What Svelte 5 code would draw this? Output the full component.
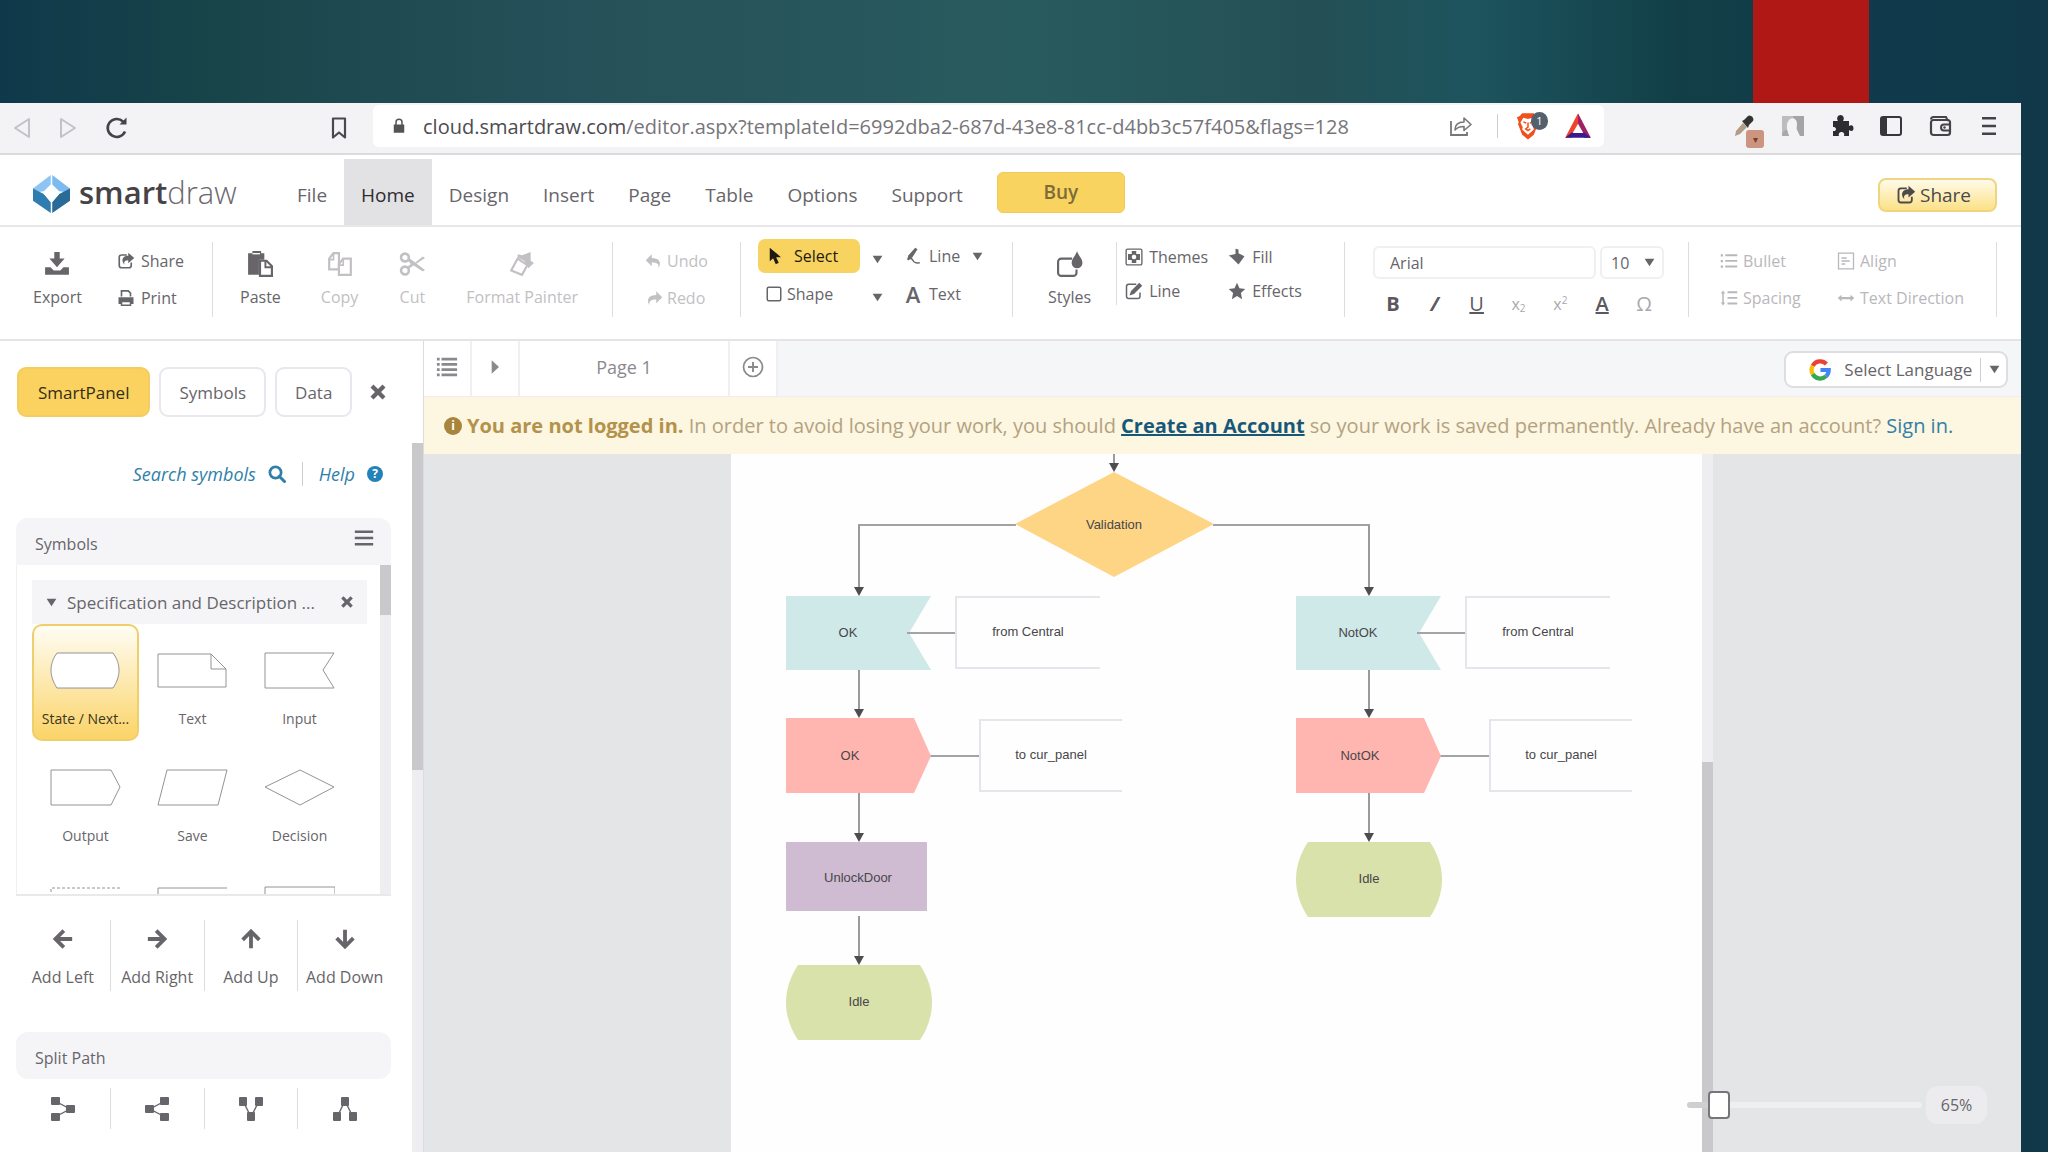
<script>
  const icons = {
    back: '<path d="M20 3v18L6 12z" fill="none" stroke="#c4c2c8" stroke-width="2" stroke-linejoin="round"/>',
    forward: '<path d="M4 3v18l14-9z" fill="none" stroke="#c4c2c8" stroke-width="2" stroke-linejoin="round"/>',
    reload: '<path d="M20 15.500A9 9 0 1 1 18 5.500" fill="none" stroke="#454248" stroke-width="2.600"/><path d="M14.500 8.500h7V1.500z" fill="#454248"/>',
    bookmark: '<path d="M6 2.500h12v19l-6-5-6 5z" fill="none" stroke="#4a484d" stroke-width="2.200" stroke-linejoin="round"/>',
    lock: '<path d="M5 10h14v11H5z"/><path d="M8 11V7a4 4 0 0 1 8 0v4" fill="none" stroke="currentColor" stroke-width="2"/>',
    send: '<path d="M2 7v14h16v-3" fill="none" stroke="#777" stroke-width="1.800"/><path d="M6 16c0-5 3-8 9-8V4l7 6.500-7 6v-4c-5 0-7 1-9 3.500z" fill="none" stroke="#777" stroke-width="1.600" stroke-linejoin="round"/>',
    brave: '<path d="M7 1h10l2 2.500 2.500 1-1.500 4 .5 2-3.500 9L12 23.500l-5-4-3.500-9 .5-2-1.500-4 2.500-1z" fill="#f0501c"/><path d="M8 5l4 1 4-1 2.500 4-2 4 .5 2-5 4.500L7 15l.5-2-2-4z" fill="#fff"/><path d="M8 8.500l2.500 1M16 8.500l-2.500 1M12 9v4l-2 1.500 2 1.500 2-1.500" fill="none" stroke="#f0501c" stroke-width="1.300"/>',
    bat: '<path d="M12 1L1 22h6l5-11z" fill="#f0432c"/><path d="M12 1l11 21h-6l-5-11z" fill="#a02068"/><path d="M1 22h22l-5.500-4.500h-11z" fill="#3b1a8f"/><path d="M12 10l4.500 8h-9z" fill="#fff"/>',
    dropper: '<path d="M3 22l1-5 7-8 4 4-7 7z" fill="#b39c88"/><path d="M10 7l2-1 4-4c2-2 7 2 5 5l-4 4-1 3z" fill="#333"/>',
    avatar: '<path d="M1 2h22v20H1z" fill="#bdbdbd"/><path d="M12 2h11v20h-5z" fill="#a4a4a4"/><path d="M8 22c-2-5-4-13 1-17 4-2 7 1 7 5 0 3-1 4 0 6l3 6z" fill="#f3f3f3"/><path d="M1 22c0-5 3-6 5-6l2 6z" fill="#a9a9a9"/>',
    puzzle: '<path d="M3 7h5c-2-3 0-6 2.500-6S15 4 13 7h6v5c3-2 4.500 0 4.500 2.200S22 18 19 16v6h-5c1-3-1-4-2.500-4S8 19 9 22H3v-5c4 1 4-5 0-4z" fill="#2e2c31"/>',
    panel: '<rect x="2" y="3" width="20" height="18" rx="2" fill="none" stroke="#38363b" stroke-width="2"/><path d="M3 4h5v16H3z" fill="#38363b"/>',
    wallet: '<path d="M3 5.500C3 4 4 3 5.500 3H18l2 4" fill="none" stroke="#454248" stroke-width="2"/><rect x="3" y="6" width="19" height="15" rx="2.500" fill="none" stroke="#454248" stroke-width="2.200"/><path d="M22 10.500h-6a3 3 0 0 0 0 6h6" fill="none" stroke="#454248" stroke-width="2"/><circle cx="16.500" cy="13.500" r="1.200"/>',
    menu: '<path d="M5 3h14v2.400H5zM5 10.800h14v2.400H5zM5 18.600h14V21H5z"/>',
    download: '<path d="M9.500 1h5v6h4.500l-7 8-7-8h4.500z"/><path d="M1 15h5l3 3h6l3-3h5v7H1z"/>',
    share: '<path d="M13 4H6a3 3 0 0 0-3 3v11a3 3 0 0 0 3 3h10a3 3 0 0 0 3-3v-4" fill="none" stroke="currentColor" stroke-width="2.200"/><path d="M15 1l8 7-8 7v-4c-5 0-6 2-5 6-5-5-3-12 5-12z"/>',
    print: '<path d="M6 10V2.500h9l3 3V10" fill="none" stroke="currentColor" stroke-width="2.200"/><path d="M2 11h20v9h-4v-3H6v3H2z"/><path d="M6 16.500h12v5H6z" fill="#fff" stroke="currentColor" stroke-width="2"/>',
    paste: '<path d="M1 2h4V0h8v2h3v6h-5v14H1z"/><path d="M5 2.500h7" stroke="#fff" stroke-width="1.200"/><path d="M12 9h6l5 5v9H12z" fill="#fff" stroke="currentColor" stroke-width="2"/><path d="M17 9v6h6" fill="none" stroke="currentColor" stroke-width="1.800"/>',
    copy: '<path d="M6 2h5v15H2V7z" fill="none" stroke="currentColor" stroke-width="2"/><path d="M6 2v6H2" fill="none" stroke="currentColor" stroke-width="1.500"/><path d="M15 7h7v15H11V12z" fill="#fff" stroke="currentColor" stroke-width="2"/><path d="M15 7v6h-4" fill="none" stroke="currentColor" stroke-width="1.500"/>',
    cut: '<g fill="none" stroke="currentColor" stroke-width="2.400"><circle cx="5.500" cy="6" r="3.600"/><circle cx="5.500" cy="18" r="3.600"/></g><path d="M8 9L10 7l5 3.500L22 5l2 1.500L11 15l-2.500 2L7 15l4-3z"/><path d="M13 13l3-1.500 8 6-2 1.500z"/>',
    painter: '<path d="M8 3l4 1 8-3v8l3 2-5 5-4-7-6-3z"/><path d="M8 7l9 6-5 9-10-4z" fill="none" stroke="currentColor" stroke-width="2"/>',
    undo: '<path d="M9 3v5c9 0 14 5 9 14 1-6-2-8-9-8v5L1 11z"/>',
    redo: '<path d="M15 3v5C6 8 1 13 6 22c-1-6 2-8 9-8v5l8-8z"/>',
    pointer: '<path d="M5 1v18l4.500-4 3.500 8 4-2-3.500-7.500H20z"/>',
    line: '<path d="M15 1l3 2-7 11-7 3 2-6z"/><path d="M5 17c5-3 6-1 7 1s2 4 9 3" fill="none" stroke="currentColor" stroke-width="2"/>',
    square: '<rect x="3" y="3" width="18" height="18" rx="2" fill="none" stroke="currentColor" stroke-width="2"/>',
    styles: '<path d="M14 7H4a3 3 0 0 0-3 3v10a3 3 0 0 0 3 3h11a3 3 0 0 0 3-3v-3" fill="none" stroke="currentColor" stroke-width="2"/><path d="M18.500 0c1 4 5 7 5 11a5 5 0 0 1-10 0c0-4 4-7 5-11z"/>',
    themes: '<rect x="1.500" y="1.500" width="21" height="21" rx="2" fill="none" stroke="currentColor" stroke-width="1.800"/><path d="M9 4h6v4h5v8h-5v4H9v-4H4V8h5z"/><circle cx="12" cy="12" r="3" fill="#fff"/>',
    fill: '<path d="M10 1l4 1v5l8 4-8 11-9-9-4-3 9-2z"/>',
    edit: '<path d="M15 3H5a3 3 0 0 0-3 3v13a3 3 0 0 0 3 3h12a3 3 0 0 0 3-3v-5" fill="none" stroke="currentColor" stroke-width="2"/><path d="M19 1l4 4-11 11-6 2 2-6z"/>',
    star: '<path d="M12 1l3.300 7.300 7.700.9-5.800 5.400L18.800 23 12 18.800 5.200 23l1.600-8.400L1 9.200l7.700-.9z"/>',
    list: '<path d="M1 3h3v3H1zM1 10.500h3v3H1zM1 18h3v3H1zM7 3h16v2.500H7zM7 10.500h16V13H7zM7 18h16v2.500H7z"/>',
    pages: '<path d="M1 2h3v3H1zM1 7.700h3v3H1zM1 13.400h3v3H1zM1 19h3v3H1zM6 2h17v3H6zM6 7.700h17v3H6zM6 13.400h17v3H6zM6 19h17v3H6z"/>',
    spacing: '<path d="M4 2L1 6h2v12H1l3 4 3-4H5V6h2zM10 3h13v2.500H10zM10 10.500h13V13H10zM10 18h13v2.500H10z"/>',
    align: '<rect x="2" y="1.500" width="20" height="21" fill="none" stroke="currentColor" stroke-width="1.700"/><path d="M6 7h7v2H6zM6 11h11v2H6zM6 15h5v2H6z"/>',
    direction: '<path d="M1 12l5-4.500v3h12v-3l5 4.500-5 4.500v-3H6v3z"/>',
    close: '<path d="M6 2l6 6 6-6 4 4-6 6 6 6-4 4-6-6-6 6-4-4 6-6-6-6z"/>',
    search: '<circle cx="10" cy="10" r="7.500" fill="none" stroke="currentColor" stroke-width="3.600"/><path d="M15 15l7 7" stroke="currentColor" stroke-width="4" stroke-linecap="round"/>',
    bars: '<path d="M1 3h22v3H1zM1 10.500h22v3H1zM1 18h22v3H1z"/>',
    caret: '<path d="M3 5h18L12 19z"/>',
    play: '<path d="M7 2v20l11-10z"/>',
    plus: '<circle cx="12" cy="12" r="9.500" fill="none" stroke="currentColor" stroke-width="1.700"/><path d="M12 7v10M7 12h10" stroke="currentColor" stroke-width="1.900"/>',
    left: '<path d="M13 2L3 12l10 10M4 12h19" fill="none" stroke="currentColor" stroke-width="4.600"/>',
    right: '<path d="M11 2l10 10-10 10M20 12H1" fill="none" stroke="currentColor" stroke-width="4.600"/>',
    up: '<path d="M2 13L12 3l10 10M12 4v19" fill="none" stroke="currentColor" stroke-width="4.600"/>',
    down: '<path d="M2 11l10 10 10-10M12 20V1" fill="none" stroke="currentColor" stroke-width="4.600"/>',
    splitRight: '<path d="M4 4l15 8-15 8" fill="none" stroke="currentColor" stroke-width="1.400"/><rect width="9" height="8" rx="1"/><rect y="16" width="9" height="8" rx="1"/><rect x="15" y="8" width="9" height="8" rx="1"/>',
    splitLeft: '<path d="M20 4L5 12l15 8" fill="none" stroke="currentColor" stroke-width="1.400"/><rect x="15" width="9" height="8" rx="1"/><rect x="15" y="16" width="9" height="8" rx="1"/><rect y="8" width="9" height="8" rx="1"/>',
    splitDown: '<path d="M4 4l8 16 8-16" fill="none" stroke="currentColor" stroke-width="1.400"/><rect width="8" height="9" rx="1"/><rect x="16" width="8" height="9" rx="1"/><rect x="8" y="15" width="8" height="9" rx="1"/>',
    splitUp: '<path d="M4 20l8-16 8 16" fill="none" stroke="currentColor" stroke-width="1.400"/><rect x="8" width="8" height="9" rx="1"/><rect y="15" width="8" height="9" rx="1"/><rect x="16" y="15" width="8" height="9" rx="1"/>',
    google: '<g fill="none" stroke-width="4.600"><path d="M4 7.500A9.300 9.300 0 0 1 19 5.500" stroke="#ea4335"/><path d="M4 16.500a9.500 9.500 0 0 1 0-9" stroke="#fbbc05"/><path d="M18.500 18.800A9.300 9.300 0 0 1 4 16.500" stroke="#34a853"/><path d="M12.500 12h9c0 3-1 5.200-3 6.800" stroke="#4285f4"/></g>',
    logo: '<path d="M11.500 0v7L7 12l-7 1V10z" fill="#8cc4f4"/><path d="M12.500 0v7l4.500 5 7 1V10z" fill="#7dbaf0"/><path d="M0 10l7 4 4.500 6v8L0 19z" fill="#2f7cb0"/><path d="M24 10l-7 4-4.500 6v8L24 19z" fill="#296a96"/><path d="M12 8l5 6-5 6-5-6z" fill="#fff"/>'
  };

  const menus = ['File', 'Home', 'Design', 'Insert', 'Page', 'Table', 'Options', 'Support'];
  const extensions = ['puzzle', 'panel', 'wallet', 'menu'];

  const symbols = [
    { name: 'State / Next...', path: 'M7 1H63C71 12 71 24 63 36H7C-1 24-1 12 7 1z', active: true },
    { name: 'Text', path: 'M1 2H54L69 17V35H1zM54 2V17H69' },
    { name: 'Input', path: 'M1 1H70L59 18L70 36H1z' },
    { name: 'Output', path: 'M1 1H61L70 18L61 36H1z' },
    { name: 'Save', path: 'M10 1H70L61 36H1z' },
    { name: 'Decision', path: 'M1 18L36 1L70 18L36 36z' },
    { label: 'Dashed bracket', path: 'M70 2H1V36', dashed: true },
    { label: 'Bracket', path: 'M70 2H1V36' },
    { label: 'Block', path: 'M1 36V1H71V36' }
  ];

  const adds = [['left', 'Add Left'], ['right', 'Add Right'], ['up', 'Add Up'], ['down', 'Add Down']];
  const splits = [['splitRight', 'Merge right'], ['splitLeft', 'Split right'], ['splitDown', 'Merge down'], ['splitUp', 'Split down']];

  const branches = [
    { x: 55, y: 142, name: 'OK', idle: 369, task: 'UnlockDoor' },
    { x: 565, y: 142, name: 'NotOK', idle: 246 }
  ];

  let zoom = $state(65);
</script>

{#snippet icon(name, size = 's18')}
  <svg class="icon {size}" viewBox="0 0 24 24" fill="currentColor" aria-hidden="true">{@html icons[name]}</svg>
{/snippet}

{#snippet tool(name, label)}
  <button class="tool">{@render icon(name)}<span>{label}</span></button>
{/snippet}

{#snippet big(name, label)}
  <button class="big">{@render icon(name, 's26')}<span>{label}</span></button>
{/snippet}

{#snippet arrow(x, from, to)}
  <path d="M{x} {from}V{to - 8}" stroke="#9a9a9d" stroke-width="2" />
  <path d="M{x - 5} {to - 9}h10l-5 9z" fill="#4d4d50" />
{/snippet}

<div class="slide">
  <div class="accent"></div>
  <div class="window">
    <header class="browser">
      <nav class="history" aria-label="History">
        <button aria-label="Back">{@render icon('back', 's24')}</button>
        <button aria-label="Forward">{@render icon('forward', 's24')}</button>
        <button aria-label="Reload">{@render icon('reload', 's24')}</button>
        <button class="mark" aria-label="Bookmark">{@render icon('bookmark', 's24')}</button>
      </nav>
      <div class="address">
        {@render icon('lock')}
        <span class="url"><b>cloud.smartdraw.com</b>/editor.aspx?templateId=6992dba2-687d-43e8-81cc-d4bb3c57f405&amp;flags=128</span>
        <button aria-label="Share page">{@render icon('send', 's24')}</button>
        <i class="bar"></i>
        <button class="shield" aria-label="Shields">{@render icon('brave', 's28')}<span class="count">1</span></button>
        <button aria-label="Rewards">{@render icon('bat', 's28')}</button>
      </div>
      <div class="extensions">
        <button class="dropper" aria-label="Colour picker">{@render icon('dropper', 's24')}<span class="chip">▾</span></button>
        <button aria-label="Profile">{@render icon('avatar', 's24')}</button>
        {#each extensions as name}
          <button aria-label={name}>{@render icon(name, 's24')}</button>
        {/each}
      </div>
    </header>

    <div class="menubar">
      <a class="logo" href="#home">
        <svg viewBox="0 0 24 28" preserveAspectRatio="none" aria-hidden="true">{@html icons.logo}</svg>
        <span><b>smart</b>draw</span>
      </a>
      <nav class="menus">
        {#each menus as name}
          <button class:current={name === 'Home'}>{name}</button>
        {/each}
      </nav>
      <button class="buy">Buy</button>
      <button class="share">{@render icon('share', 's20')}Share</button>
    </div>

    <div class="ribbon">
      <div class="group files">
        {@render big('download', 'Export')}
        <div class="stack">{@render tool('share', 'Share')}{@render tool('print', 'Print')}</div>
      </div>
      <div class="group clip">
        {@render big('paste', 'Paste')}
        <div class="faded">{@render big('copy', 'Copy')}{@render big('cut', 'Cut')}{@render big('painter', 'Format Painter')}</div>
      </div>
      <div class="group past">
        <div class="stack">{@render tool('undo', 'Undo')}{@render tool('redo', 'Redo')}</div>
      </div>
      <div class="group draw">
        <div class="pens">
          <button class="tool selected">{@render icon('pointer')}<span>Select</span></button>
          <button class="drop" aria-label="Select options">{@render icon('caret', 's13')}</button>
          <button class="tool wide">{@render icon('line')}<span>Line</span>{@render icon('caret', 's13')}</button>
          <button class="tool shape">{@render icon('square')}<span>Shape</span></button>
          <button class="drop" aria-label="Shape options">{@render icon('caret', 's13')}</button>
          <button class="tool wide"><span class="letter">A</span><span>Text</span></button>
        </div>
      </div>
      <div class="group look">
        {@render big('styles', 'Styles')}
        <div class="looks">
          {@render tool('themes', 'Themes')}{@render tool('fill', 'Fill')}
          {@render tool('edit', 'Line')}{@render tool('star', 'Effects')}
        </div>
      </div>
      <div class="group type">
        <div class="fonts">
          <input aria-label="Font" value="Arial" />
          <div class="size">
            <select aria-label="Font size"><option>10</option><option>12</option></select>
            {@render icon('caret', 's13')}
          </div>
        </div>
        <div class="marks">
          <button><b>B</b></button>
          <button><b><em>/</em></b></button>
          <button><u>U</u></button>
          <button class="dim">x<sub>2</sub></button>
          <button class="dim">x<sup>2</sup></button>
          <button><u class="heavy">A</u></button>
          <button class="dim omega">Ω</button>
        </div>
      </div>
      <div class="group para">
        {@render tool('list', 'Bullet')}{@render tool('align', 'Align')}
        {@render tool('spacing', 'Spacing')}{@render tool('direction', 'Text Direction')}
      </div>
    </div>

    <div class="work">
      <aside>
        <div class="panels">
          <button class="on">SmartPanel</button>
          <button>Symbols</button>
          <button>Data</button>
          <button class="plain" aria-label="Close panel">{@render icon('close')}</button>
        </div>
        <div class="scroll">
          <div class="content">
            <div class="links">
              <a href="#search">Search symbols{@render icon('search')}</a>
              <i class="bar"></i>
              <a href="#help">Help<span class="dot help">?</span></a>
            </div>
            <section class="library">
              <h2>Symbols<button aria-label="Symbols menu">{@render icon('bars', 's20')}</button></h2>
              <div class="shelf">
                <div class="set">
                  <h3>{@render icon('caret', 's13')}<span>Specification and Description ...</span><button aria-label="Close set">{@render icon('close', 's14')}</button></h3>
                  <div class="tiles">
                    {#each symbols as s}
                      <button class:active={s.active} aria-label={s.label}>
                        <svg viewBox="0 0 71 37" aria-hidden="true"><path d={s.path} class:dashed={s.dashed} /></svg>
                        {#if s.name}<span>{s.name}</span>{/if}
                      </button>
                    {/each}
                  </div>
                </div>
                <div class="track"><div class="thumb short"></div></div>
              </div>
            </section>
            <div class="four adds">
              {#each adds as [name, label]}
                <button>{@render icon(name, 's20')}<span>{label}</span></button>
              {/each}
            </div>
            <h2 class="split">Split Path</h2>
            <div class="four splits">
              {#each splits as [name, label]}
                <button aria-label={label}>{@render icon(name, 's24')}</button>
              {/each}
            </div>
          </div>
          <div class="track"><div class="thumb long"></div></div>
        </div>
      </aside>

      <main>
        <div class="tabs">
          <button class="cell" aria-label="Page list">{@render icon('pages', 's22')}</button>
          <button class="cell" aria-label="Next">{@render icon('play', 's16')}</button>
          <button class="cell page-tab">Page 1</button>
          <button class="cell" aria-label="Add page">{@render icon('plus', 's24')}</button>
          <label class="language">
            {@render icon('google', 's22')}
            <select aria-label="Select Language"><option>Select Language</option></select>
            <i class="bar"></i>
            {@render icon('caret', 's13')}
          </label>
        </div>
        <p class="banner">
          <span class="dot info">i</span>
          <span><b>You are not logged in.</b> In order to avoid losing your work, you should <a class="create" href="#create">Create an Account</a> so your work is saved permanently. Already have an account? <a href="#signin">Sign in.</a></span>
        </p>
        <div class="canvas">
          <div class="page">
            <svg class="diagram" width="972" height="640" role="img" aria-label="Flowchart">
              <g fill="none">
                <path d="M285 71H128V136M482 71H638V136" stroke="#a2a2a5" stroke-width="2" />
                {@render arrow(383, 0, 18)}
                {@render arrow(128, 71, 142)}
                {@render arrow(638, 71, 142)}
              </g>
              <path d="M383 18L483 70L383 123L284 70z" fill="#fdd585" />
              <text x="383" y="75">Validation</text>
              {#each branches as b}
                <g transform="translate({b.x} {b.y})">
                  <path d="M0 0H145L123 37L145 74H0z" fill="#cfe8e8" />
                  <path d="M121 37H170M144 160H194" stroke="#a2a4a7" stroke-width="2" />
                  <path d="M314 1H170V72H314M336 124H194V195H336" fill="none" stroke="#e4e6ec" stroke-width="2" />
                  <path d="M0 122H128L145 160L128 197H0z" fill="#ffb6b0" />
                  {@render arrow(73, 74, 122)}
                  {@render arrow(73, 197, 246)}
                  <text x="62" y="41">{b.name}</text>
                  <text x="242" y="40">from Central</text>
                  <text x="64" y="164">{b.name}</text>
                  <text x="265" y="163">to cur_panel</text>
                  {#if b.task}
                    <rect y="246" width="141" height="69" fill="#cfbcd2" />
                    <text x="72" y="286">{b.task}</text>
                    {@render arrow(73, 320, 369)}
                  {/if}
                  <g transform="translate(0 {b.idle})">
                    <path d="M12 0H134C150 24 150 51 134 75H12C-4 51-4 24 12 0z" fill="#d9e2aa" />
                    <text x="73" y="41">Idle</text>
                  </g>
                </g>
              {/each}
            </svg>
          </div>
          <div class="track"><div class="thumb low"></div></div>
          <div class="zoom">
            <input type="range" aria-label="Zoom" min="45" max="245" bind:value={zoom} />
            <output>{zoom}%</output>
          </div>
        </div>
      </main>
    </div>
  </div>
</div>

<style>
  :global(body) { margin: 0; font-family: "Open Sans", "Noto Sans", sans-serif; font-size: 16px; color: #67656a; }
  button, input, select { font: inherit; color: inherit; background: none; border: 0; padding: 0; margin: 0; }
  button { display: inline-flex; align-items: center; justify-content: center; white-space: nowrap; }
  h2, h3, p { margin: 0; font-weight: 400; }
  a { text-decoration: none; }
  select { appearance: none; }

  .icon { flex: none; display: block; }
  .s13 { width: 13px; height: 13px; }
  .s14 { width: 14px; height: 14px; }
  .s16 { width: 16px; height: 16px; }
  .s18 { width: 18px; height: 18px; }
  .s20 { width: 20px; height: 20px; }
  .s22 { width: 22px; height: 22px; }
  .s24 { width: 24px; height: 24px; }
  .s26 { width: 26px; height: 26px; }
  .s28 { width: 28px; height: 28px; }
  .bar { width: 1px; height: 24px; background: #cfcfd3; }

  .slide {
    position: relative; box-sizing: border-box; min-height: 100vh; display: flex; padding: 103px 27px 0 0;
    background: linear-gradient(90deg, #10384b 0, #174449 10%, #265059 27%, #285b5e 50%, #245055 64%, #1d545e 72%, #123f47 82%, #103a4b 92%, #103849);
  }
  .accent { position: absolute; top: 0; right: 179px; width: 116px; height: 103px; background: #b01815; }
  .window { flex: 1; min-width: 0; display: flex; flex-direction: column; background: #fff; }

  .browser { display: flex; align-items: center; height: 50px; background: #f3f2f5; border-bottom: 2px solid #dcdadd; }
  .history { display: flex; gap: 24px; width: 364px; padding-left: 9px; align-items: center; }
  .history .mark { margin-left: auto; margin-right: 22px; }
  .address { flex: 1; display: flex; align-items: center; height: 42px; margin-bottom: 4px; padding: 0 12px 0 17px; border-radius: 6px; background: #fff; color: #555358; }
  .url { margin: 0 auto 0 15px; font-size: 20px; color: #77757a; white-space: nowrap; }
  .url b { font-weight: 400; color: #4d4b50; }
  .address .bar { margin: 0 16px 0 24px; }
  .shield { position: relative; margin-right: 22px; }
  .count { position: absolute; left: 17px; top: 0; width: 17px; height: 18px; border-radius: 9px; background: #55606d; color: #fff; font-size: 11px; line-height: 18px; }
  .extensions { display: flex; align-items: center; gap: 25px; width: 270px; padding: 0 19px 4px 128px; color: #454248; }
  .dropper { position: relative; }
  .chip { position: absolute; left: 14px; top: 16px; width: 18px; height: 18px; border-radius: 3px; background: #cc957f; color: #7a3b28; font-size: 10px; line-height: 18px; }

  .menubar { display: flex; align-items: center; box-sizing: border-box; height: 72px; padding: 4px 24px 0 0; border-bottom: 2px solid #e8e6e8; font-size: 19px; }
  .logo { display: flex; align-items: center; gap: 9px; width: 247px; padding-left: 33px; font-size: 31px; line-height: 40px; font-weight: 300; color: #6b696d; }
  .logo svg { width: 37px; height: 38px; margin-top: 4px; }
  .logo b { font-weight: 600; color: #454347; }
  .menus { display: flex; align-self: stretch; }
  .menus button { padding: 6px 17px 0; }
  .menus .current { background: #e2e2e4; color: #2e2c30; }
  .buy { width: 128px; height: 41px; margin: 0 auto 0 17px; border-radius: 6px; background: #f9d35f; border: 1px solid #f0ca58; font-weight: 600; color: #7d6b3a; }
  .share { width: 119px; height: 34px; margin-top: 6px; gap: 4px; padding-right: 8px; border: 2px solid #f0d580; border-radius: 8px; background: linear-gradient(#fffbea, #fce186); color: #4c4a4a; }

  .ribbon { display: grid; grid-template-columns: 213fr 400fr 128fr 272fr 332fr 344fr 308fr; padding: 15px 24px 22px 0; border-bottom: 2px solid #e4e3e6; }
  .group { display: flex; box-sizing: border-box; height: 75px; border-right: 1px solid #dddce0; }
  .big { display: flex; flex-direction: column; justify-content: flex-start; gap: 7px; padding-top: 9px; line-height: 26px; }
  .tool { gap: 6px; justify-content: flex-start; }
  .stack { display: grid; grid-template-rows: 1fr 1fr; }
  .files { padding-left: 33px; gap: 35px; }
  .clip { padding-left: 27px; justify-content: flex-start; gap: 40px; }
  .faded { display: flex; gap: 41px; color: #c2c0c4; }
  .past { padding-left: 32px; color: #c2c0c4; }
  .past .tool { gap: 4px; }
  .draw { padding-left: 17px; }
  .pens { display: grid; grid-template-columns: 113px 33px 1fr; grid-template-rows: 34px 34px; row-gap: 4px; margin-top: -3px; align-items: center; }
  .selected { height: 34px; margin-right: 11px; padding-left: 8px; gap: 10px; border-radius: 7px; background: #f9d35f; color: #1d1a10; }
  .drop { justify-content: flex-start; padding-top: 6px; }
  .shape { padding-left: 7px; gap: 4px; }
  .wide { gap: 7px; }
  .wide .s13 { margin-left: 4px; }
  .letter { width: 18px; font-size: 22px; font-weight: 600; line-height: 24px; }
  .look { padding-left: 35px; gap: 25px; }
  .looks { display: grid; grid-template-columns: 103px auto; grid-template-rows: 29px 29px; row-gap: 5px; height: 63px; padding-left: 8px; border-left: 1px solid #dddce0; align-content: start; }
  .type { flex-direction: column; padding: 4px 24px 0 28px; gap: 12px; }
  .fonts { display: flex; gap: 4px; height: 37px; }
  .fonts input { flex: 1; min-width: 0; box-sizing: border-box; padding-left: 15px; border: 2px solid #f0eff2; border-radius: 6px; }
  .size { display: flex; align-items: center; box-sizing: border-box; width: 64px; padding: 0 6px 0 9px; border: 2px solid #f0eff2; border-radius: 6px; justify-content: space-between; }
  .marks { display: flex; justify-content: space-between; padding: 0 10px; font-size: 20px; line-height: 26px; color: #5b595e; }
  .marks button { width: 20px; height: 26px; }
  .marks .dim { font-size: 16px; color: #aaa8ad; }
  .marks .omega { font-size: 20px; }
  sub, sup { font-size: 10px; line-height: 10px; }
  sup { align-self: flex-start; padding-top: 4px; }
  sub { align-self: flex-end; padding-bottom: 4px; }
  .heavy { font-weight: 600; }
  .para { display: grid; grid-template-columns: 117px auto; grid-template-rows: 1fr 1fr; padding-left: 31px; color: #b9b7bc; justify-content: start; }
  .para .tool { gap: 5px; }

  .work { flex: 1; display: flex; min-height: 812px; }
  aside { width: 423px; display: flex; flex-direction: column; border-right: 1px solid #dcdbe0; }
  .panels { display: flex; gap: 9px; height: 50px; padding: 26px 17px; font-size: 17px; }
  .panels button { padding: 0 18px; border: 2px solid #e9e7ed; border-radius: 9px; }
  .panels .on { padding: 0 19px; background: #fbd25f; border-color: #f3cd62; color: #332d18; }
  .panels .plain { border: 0; padding: 0 8px; }
  .scroll { flex: 1; display: flex; }
  .content { flex: 1; padding: 0 21px 0 16px; }
  .track { width: 11px; background: #eeedf0; }
  .thumb { background: #c9c8cb; }
  .long { height: 46%; }
  .short { height: 50px; }
  .links { display: flex; align-items: center; justify-content: flex-end; gap: 16px; height: 62px; padding: 0 8px 13px 0; font-size: 18px; font-style: italic; }
  .links a { display: flex; align-items: center; gap: 12px; color: #2f7fa9; }
  .dot { flex: none; border-radius: 50%; width: 16px; height: 16px; font-size: 12px; font-weight: 700; font-style: normal; line-height: 16px; text-align: center; color: #fff; }
  .help { background: #2383b8; }
  h2 { display: flex; align-items: center; justify-content: space-between; box-sizing: border-box; height: 47px; padding: 4px 17px 0 19px; border-radius: 12px 12px 0 0; background: #f5f5f8; font-size: 16px; }
  h2 button { margin-bottom: 12px; }
  .library { height: 378px; box-sizing: border-box; overflow: hidden; border-bottom: 2px solid #e9e8eb; }
  .shelf { display: flex; height: 331px; border-left: 1px solid #f0f0f2; }
  .set { flex: 1; padding: 15px 13px 0 15px; }
  h3 { display: flex; align-items: center; height: 44px; padding: 0 13px; gap: 9px; background: #f5f5f8; font-size: 17px; }
  h3 span { flex: 1; white-space: nowrap; }
  .tiles { display: grid; grid-template-columns: repeat(3, 107px); grid-auto-rows: 117px; }
  .tiles button { flex-direction: column; justify-content: flex-start; gap: 18px; padding-top: 27px; border: 1px solid transparent; border-radius: 10px; font-size: 14px; line-height: 24px; }
  .tiles svg { flex: none; width: 71px; height: 37px; }
  .tiles path { fill: #fff; stroke: #949297; stroke-width: 1; }
  .tiles .dashed { stroke-dasharray: 3 2; }
  .tiles .active { border: 2px solid #efcf6c; padding-top: 26px; background: linear-gradient(#fffdf4, #fbd468); color: #3c3520; }
  .four { display: grid; grid-template-columns: repeat(4, 1fr); }
  .four button + button { border-left: 1px solid #dddce0; }
  .adds { margin: 24px 0 41px; height: 71px; }
  .adds button { flex-direction: column; gap: 16px; padding-top: 7px; line-height: 24px; }
  .split { border-radius: 12px; }
  .splits { margin-top: 9px; height: 41px; }

  main { flex: 1; min-width: 0; display: flex; flex-direction: column; }
  .tabs { display: flex; height: 55px; background: #f5f6f8; border-bottom: 1px solid #f2ecec; }
  .cell { box-sizing: border-box; width: 48px; padding-bottom: 4px; background: #fff; border-right: 2px solid #f1eff3; color: #8b898e; }
  .page-tab { width: 210px; font-size: 18px; }
  .language { display: flex; align-items: center; box-sizing: border-box; width: 224px; height: 37px; margin: 10px 13px 0 auto; padding: 0 5px 0 23px; border: 2px solid #dedde1; border-radius: 9px; background: #fff; justify-content: space-between; font-size: 17px; }
  .language select { margin-left: 6px; }
  .banner { display: flex; align-items: center; height: 57px; padding-left: 20px; gap: 5px; background: #fdf6e0; font-size: 20px; color: #b3a282; white-space: nowrap; overflow: hidden; }
  .banner b { color: #b3924c; }
  .info { width: 18px; height: 18px; line-height: 18px; background: #a8853c; }
  .banner a { color: #337fa8; }
  .banner .create { font-weight: 700; color: #17587a; text-decoration: underline; }
  .canvas { position: relative; flex: 1; display: flex; padding: 0 308px 0 307px; background: #e3e5e7; }
  .page { flex: 1; min-width: 0; background: #fefefe; }
  .diagram { display: block; margin: 0 auto; }
  text { font-family: "Liberation Sans", Arial, sans-serif; font-size: 13px; fill: #48464a; text-anchor: middle; }
  .canvas .track { display: flex; align-items: flex-end; }
  .low { width: 11px; height: 56%; }
  .zoom { position: absolute; right: 34px; bottom: 29px; display: flex; align-items: center; gap: 4px; }
  .zoom input { appearance: none; width: 235px; height: 28px; }
  .zoom input::-webkit-slider-runnable-track { height: 6px; border-radius: 3px; background: linear-gradient(90deg, #cfced1 26px, #efeff0 26px); }
  .zoom input::-webkit-slider-thumb { appearance: none; box-sizing: border-box; width: 22px; height: 28px; margin-top: -11px; border: 2px solid #77757a; border-radius: 4px; background: #fff; }
  output { width: 61px; line-height: 38px; border-radius: 12px; background: #ececee; text-align: center; }
</style>
